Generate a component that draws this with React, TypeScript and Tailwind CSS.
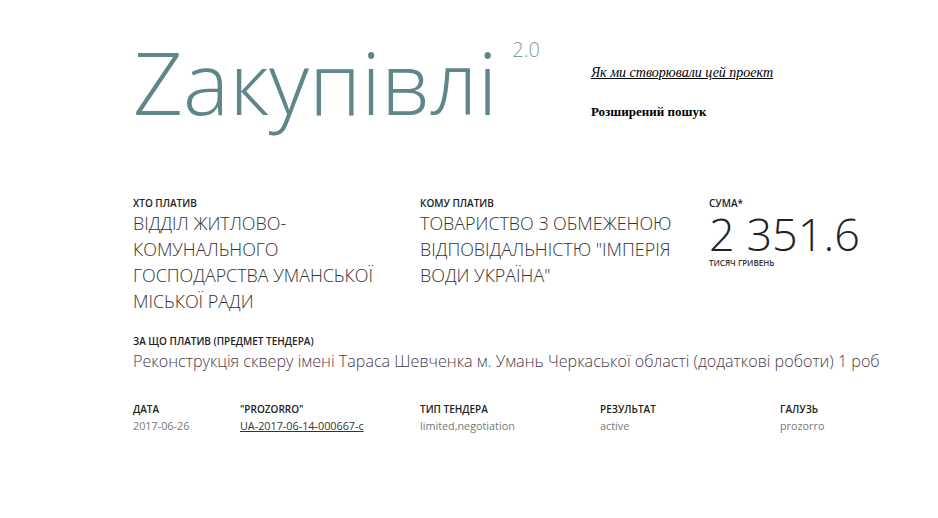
import React from 'react';

const sans = { fontFamily: '"Open Sans", "Noto Sans", sans-serif' };

const Label = ({ children }: { children: React.ReactNode }) => (
  <div className="text-[10px] font-semibold uppercase leading-[14px] text-[#222]">{children}</div>
);

const App = () => {
  return (
    <div className="min-h-[518px] w-[938px] bg-white pl-[133px] text-[#333]" style={sans}>
      {/* header */}
      <div className="flex pt-[27px]">
        <h1 className="text-[87px] font-light leading-[108px] text-[#5f8688]">Zакупівлі</h1>
        <span className="ml-[15px] mt-[11px] text-[20px] font-light leading-[24px] text-[#8a9a9b]">2.0</span>
        <div className="ml-[51px] mt-[38px] flex flex-col" style={{ fontFamily: '"Liberation Serif", serif' }}>
          <a href="#" className="text-[14px] italic leading-[16px] text-black underline">
            Як ми створювали цей проект
          </a>
          <a href="#" className="mt-[23px] text-[13px] font-bold leading-[16px] text-black">
            Розширений пошук
          </a>
        </div>
      </div>

      {/* who / whom / sum */}
      <div className="mt-[61px] flex">
        <div className="mr-[27px] w-[260px]">
          <Label>Хто платив</Label>
          <div className="text-[17.9px] font-light uppercase leading-[26px] text-[#333]">
            Відділ житлово-комунального господарства Уманської міської ради
          </div>
        </div>
        <div className="mr-[29px] w-[260px]">
          <Label>Кому платив</Label>
          <div className="text-[17.9px] font-light uppercase leading-[26px] text-[#333]">
            Товариство з обмеженою відповідальністю "Імперія води Україна"
          </div>
        </div>
        <div>
          <Label>Сума*</Label>
          <div className="mt-[3px] text-[45px] font-light leading-[42px] text-[#222]">2 351.6</div>
          <div className="mt-[3px] text-[8px] font-semibold uppercase leading-[10px] text-[#333]">тисяч гривень</div>
        </div>
      </div>

      {/* subject */}
      <div className="mt-[20px]">
        <Label>За що платив (предмет тендера)</Label>
        <div className="mt-[2px] text-[16.15px] font-light leading-[22px] text-[#4a3a4a]">
          Реконструкція скверу імені Тараса Шевченка м. Умань Черкаської області (додаткові роботи) 1 роб
        </div>
      </div>

      {/* details */}
      <div className="mt-[30px] flex text-[10.8px] leading-[16px]">
        <div className="w-[107px]">
          <Label>Дата</Label>
          <div className="mt-[2px] text-[#777]">2017-06-26</div>
        </div>
        <div className="w-[180px]">
          <Label>"Prozorro"</Label>
          <a href="#" className="mt-[2px] block text-[#333] underline">UA-2017-06-14-000667-c</a>
        </div>
        <div className="w-[180px]">
          <Label>Тип тендера</Label>
          <div className="mt-[2px] text-[#777]">limited,negotiation</div>
        </div>
        <div className="w-[180px]">
          <Label>Результат</Label>
          <div className="mt-[2px] text-[#777]">active</div>
        </div>
        <div>
          <Label>Галузь</Label>
          <div className="mt-[2px] text-[#777]">prozorro</div>
        </div>
      </div>
    </div>
  );
};

export default App;
